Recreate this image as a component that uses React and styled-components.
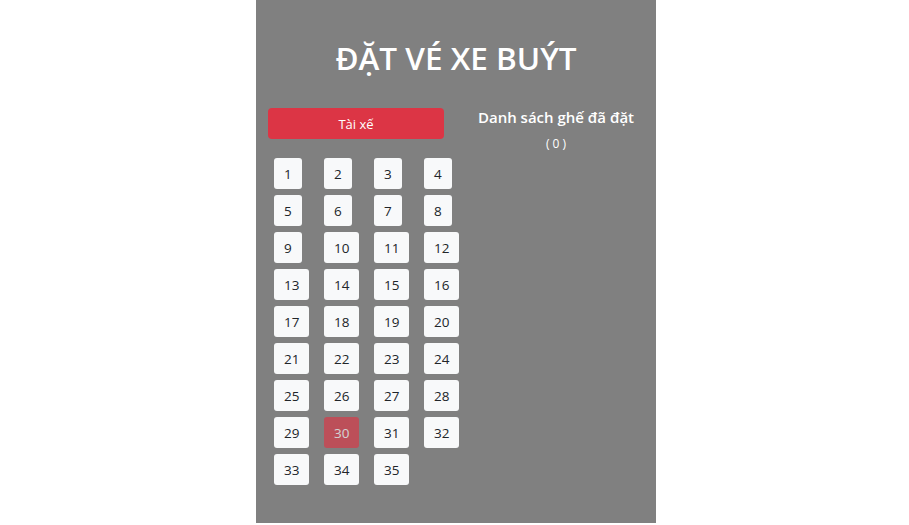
import React from "react";
import styled, { createGlobalStyle } from "styled-components";

const Global = createGlobalStyle`
  html, body { margin: 0; padding: 0; background: #fff; }
  body { font-family: "Open Sans", "Noto Sans", sans-serif; }
`;

const Page = styled.div`
  width: 400px;
  margin-left: calc(50% - 198.5px);
  background: #808080;
  min-height: 523px;
  box-sizing: border-box;
  padding: 36px 12px 38px;
  color: #fff;
`;

const Title = styled.h1`
  margin: 0 0 28px;
  text-align: center;
  font-size: 31.5px;
  font-weight: 600;
  line-height: 44px;
  color: #fff;
`;

const Row = styled.div`
  display: flex;
`;

const Col = styled.div`
  flex: 0 0 ${(p) => p.$w}px;
  min-width: 0;
  box-sizing: border-box;
`;

const DriverButton = styled.button`
  display: block;
  width: 176px;
  height: 31px;
  border: none;
  border-radius: 4px;
  background: #dc3545;
  color: #fff;
  font-family: inherit;
  font-size: 13px;
  padding: 0;
`;

const SeatGrid = styled.div`
  display: grid;
  grid-template-columns: repeat(4, 50px);
  row-gap: 6px;
  padding: 19px 0 0 6px;
`;

const Seat = styled.button`
  justify-self: start;
  height: 31px;
  padding: 0 10px;
  border: none;
  border-radius: 3px;
  font-family: inherit;
  font-size: 13.5px;
  background: ${(p) => (p.$booked ? "#dc3545" : "#f8f9fa")};
  color: ${(p) => (p.$booked ? "#fff" : "#212529")};
  opacity: ${(p) => (p.$booked ? 0.65 : 1)};
`;

const ListTitle = styled.h5`
  margin: 0;
  text-align: center;
  font-size: 15px;
  font-weight: 600;
  line-height: 18px;
`;

const Count = styled.div`
  margin-top: 10px;
  text-align: center;
  font-size: 12px;
  line-height: 16px;
`;

export default function App() {
  const seats = Array.from({ length: 35 }, (_, i) => i + 1);
  return (
    <>
      <Global />
      <Page>
        <Title>ĐẶT VÉ XE BUÝT</Title>
        <Row>
          <Col $w={200}>
            <DriverButton>Tài xế</DriverButton>
            <SeatGrid>
              {seats.map((n) => (
                <Seat key={n} $booked={n === 30}>
                  {n}
                </Seat>
              ))}
            </SeatGrid>
          </Col>
          <Col $w={176}>
            <ListTitle>Danh sách ghế đã đặt</ListTitle>
            <Count>( 0 )</Count>
          </Col>
        </Row>
      </Page>
    </>
  );
}
